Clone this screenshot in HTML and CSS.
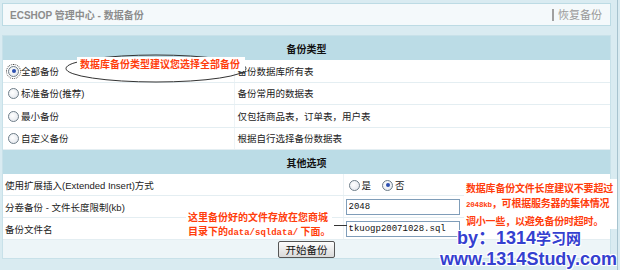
FILE: index.html
```html
<!DOCTYPE html>
<html lang="zh-CN">
<head>
    <meta charset="UTF-8">
    <title>ECSHOP 管理中心 - 数据备份</title>
    <link rel="stylesheet" href="styles.css">
</head>
<body>
<div class="page">
    <h1 class="title-bar">
        <span class="title">ECSHOP 管理中心 - 数据备份</span>
        <span class="action-link">恢复备份</span>
    </h1>

    <div class="main">
        <!-- 备份类型 -->
        <table class="list list-type">
            <colgroup><col class="col-type"><col></colgroup>
            <tr><th colspan="2">备份类型</th></tr>
            <tr>
                <td><span class="radio checked focus"></span>全部备份</td>
                <td>备份数据库所有表</td>
            </tr>
            <tr>
                <td><span class="radio"></span>标准备份(推荐)</td>
                <td>备份常用的数据表</td>
            </tr>
            <tr>
                <td><span class="radio"></span>最小备份</td>
                <td>仅包括商品表，订单表，用户表</td>
            </tr>
            <tr>
                <td><span class="radio"></span>自定义备份</td>
                <td>根据自行选择备份数据表</td>
            </tr>
        </table>

        <!-- 其他选项 -->
        <table class="list list-opts">
            <colgroup><col class="col-label"><col></colgroup>
            <tr><th colspan="2">其他选项</th></tr>
            <tr>
                <td>使用扩展插入(Extended Insert)方式</td>
                <td class="choices"><span class="radio"></span>是<span class="radio checked gap"></span>否</td>
            </tr>
            <tr>
                <td>分卷备份 - 文件长度限制(kb)</td>
                <td><input class="text" type="text" value="2048"></td>
            </tr>
            <tr>
                <td>备份文件名</td>
                <td><input class="text" type="text" value="tkuogp20071028.sql"></td>
            </tr>
            <tr class="btn-row">
                <td colspan="2"><button class="button" type="button">开始备份</button></td>
            </tr>
        </table>
    </div>

    <!-- 批注 -->
    <svg class="note-ring" width="184" height="30" viewBox="0 0 184 30">
        <ellipse cx="91" cy="14.5" rx="90" ry="13.5" fill="none" stroke="#333" stroke-width="1"/>
    </svg>
    <div class="note note-type">数据库备份类型建议您选择全部备份</div>

    <div class="note note-file">这里备份好的文件存放在您商城<br>目录下的<span class="mono">data/sqldata/</span> 下面。</div>

    <div class="note note-size">数据库备份文件长度建议不要超过<br><span class="mono small">2048kb</span>，可根据服务器的集体情况<br>调小一些，以避免备份时超时。</div>

    <div class="brand">
        <div class="brand-by">by：1314<span class="cjk">学习网</span></div>
        <div class="brand-url">www.1314Study.com</div>
    </div>
</div>
</body>
</html>
```

FILE: styles.css
```css
/* 页面 */
body {
    margin: 0;
    background: #d9ebf1;
    font-family: "Liberation Sans", "Noto Sans CJK SC", sans-serif;
    font-size: 9.5px;
    color: #222;
}

.page {
    position: relative;
    box-sizing: border-box;
    width: 618px;
    height: 270px;
    padding: 3px 6px 0 2px;
    border-right: 1px solid #a7c3cf;
    overflow: hidden;
}

/* 标题栏 */
.title-bar {
    margin: 0;
    height: 23px;
    box-sizing: border-box;
    display: flex;
    align-items: center;
    justify-content: space-between;
    padding: 0 8px 0 7px;
    border: 1px solid #bcdbe4;
    background: #f4f9fb;
    font-size: 10px;
}

.title {
    color: #8c8c8c;
    font-weight: bold;
}

.action-link {
    color: #9a9a9a;
    font-size: 11px;
    font-weight: normal;
    line-height: 12px;
    padding-left: 4px;
    border-left: 2px solid #a0a0a0;
}

/* 表格 */
.main {
    margin-top: 9px;
    border: 1px solid #c8e1e9;
    border-bottom: none;
}

.list {
    width: 100%;
    border-collapse: collapse;
    table-layout: fixed;
    background: #fff;
}

.col-type {
    width: 231px;
}

.col-label {
    width: 340px;
}

.list th {
    height: 24px;
    padding: 0;
    background: #bbdce6;
    font-size: 10px;
    font-weight: bold;
    text-align: center;
    color: #111;
}

.list td {
    height: 21px;
    padding: 0 2px;
    border-bottom: 1px solid #e4eef2;
    white-space: nowrap;
}

.list td + td {
    border-left: 1px solid #edf3f6;
}

.list-type td {
    height: 21.5px;
}

.list-type td + td {
    padding-left: 3px;
}

.choices {
    padding-left: 4px;
}

/* 单选框 */
.radio {
    position: relative;
    display: inline-block;
    width: 9px;
    height: 9px;
    margin: 0 2px 0 3px;
    border: 1px solid #6f7e89;
    border-radius: 50%;
    background: radial-gradient(circle at 40% 40%, #fff, #dfe3ea);
    vertical-align: -2px;
}

.radio.checked::after {
    content: "";
    position: absolute;
    left: 2.5px;
    top: 2.5px;
    width: 4px;
    height: 4px;
    border-radius: 50%;
    background: #2b4fb0;
}

.radio.focus {
    outline: 1px dotted #444;
    outline-offset: 1px;
}

.radio.gap {
    margin-left: 11px;
}

.text {
    width: 114px;
    height: 16px;
    box-sizing: border-box;
    margin: 0;
    padding: 0 2px;
    border: 1px solid #7f9db9;
    font-family: "Liberation Mono", monospace;
    font-size: 9px;
    color: #111;
    vertical-align: middle;
}

.btn-row td {
    height: 18px;
    padding: 0;
    background: #edf5f8;
    text-align: center;
    border-bottom: 1px solid #c8e1e9;
}

.button {
    width: 57px;
    height: 17px;
    padding: 0;
    border: 1px solid #555;
    border-radius: 2px;
    background: linear-gradient(#fdfdfd, #d9d9d9);
    font-family: "Liberation Sans", "Noto Sans CJK SC", sans-serif;
    font-size: 10.5px;
    color: #111;
    vertical-align: middle;
}

/* 批注 */
.note-ring {
    position: absolute;
    left: 65px;
    top: 54px;
}

.note {
    position: absolute;
    background: #fff;
    color: #ff3d0c;
    font-family: "Noto Sans CJK SC", sans-serif;
    font-size: 10px;
    font-weight: bold;
    white-space: nowrap;
}

.note .mono {
    font-family: "Liberation Mono", monospace;
    font-size: 9px;
}

.note .small {
    font-size: 7.5px;
}

.note-type {
    left: 77px;
    top: 57px;
    width: 165px;
    height: 14px;
    line-height: 14px;
    padding-left: 3px;
}

.note-file {
    left: 186px;
    top: 210px;
    width: 144px;
    height: 28px;
    padding-left: 2px;
    line-height: 14px;
}

.note-file::after {
    content: "";
    position: absolute;
    right: -15px;
    top: 15px;
    width: 13px;
    height: 1px;
    background: #333;
}

.note-size {
    left: 464px;
    top: 179px;
    width: 153px;
    padding: 1px 0 1px 2px;
    line-height: 15px;
    letter-spacing: -0.2px;
}

.brand {
    position: absolute;
    left: 440px;
    top: 228px;
    color: #3440d0;
    font-family: "Liberation Sans", "Noto Sans CJK SC", sans-serif;
    font-size: 18px;
    font-weight: bold;
    line-height: 21px;
    white-space: nowrap;
    text-shadow: 1px 1px 0 #fff, -1px -1px 0 #fff, 1px -1px 0 #fff, -1px 1px 0 #fff;
}

.brand-by {
    padding-left: 17px;
}

.brand .cjk {
    font-size: 15px;
}
```
